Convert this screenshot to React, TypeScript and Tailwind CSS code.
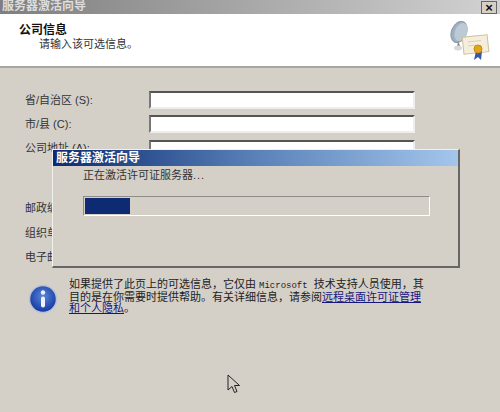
const fields = [
  { label: "省/自治区 (S):" },
  { label: "市/县 (C):" },
  { label: "公司地址 (A):", tall: true },
  { label: "邮政编码 (Z):" },
  { label: "组织单位 (O):" },
  { label: "电子邮件 (E):" },
];

function CertIcon() {
  return (
    <svg width="42" height="42" viewBox="0 0 42 42" className="block">
      <ellipse cx="10" cy="11" rx="7.500" ry="11" transform="rotate(22 10 11)" fill="#9fb0c0" stroke="#8d9aa6" />
      <ellipse cx="12" cy="11" rx="6" ry="9.500" transform="rotate(22 12 11)" fill="#bccad6" />
      <path d="M9 20l-1 7h4z" fill="#7d8388" />
      <ellipse cx="9" cy="27" rx="4" ry="2.500" fill="#d8d8d6" />
      <rect x="14" y="15" width="25" height="17" fill="#f6eedc" stroke="#cdbf9f" transform="rotate(-6 26 23)" />
      <path d="M19 21l13-1.500M19 25l8-1" stroke="#dccfb2" />
      <path d="M27 30l-2 9 4-3 3 3 1-9z" fill="#3558a8" />
      <circle cx="29" cy="28" r="4" fill="#e3a51f" stroke="#c98a10" />
    </svg>
  );
}

function InfoIcon() {
  return (
    <svg width="30" height="30" viewBox="0 0 30 30" className="block">
      <defs>
        <radialGradient id="infoFill" cx="50%" cy="40%" r="60%">
          <stop offset="0%" stopColor="#5a86dc" />
          <stop offset="100%" stopColor="#12379c" />
        </radialGradient>
      </defs>
      <circle cx="15" cy="15" r="13.500" fill="url(#infoFill)" stroke="#b9c3d8" strokeWidth="1.500" />
      <circle cx="15" cy="8.500" r="2.200" fill="#eef2fa" />
      <rect x="13" y="12.500" width="4" height="11" rx="2" fill="#eef2fa" />
    </svg>
  );
}

export default function App() {
  return (
    <div className="relative w-[500px] h-[412px] overflow-hidden bg-[#d4d0c8] text-[11px] leading-[14px] text-[#222] font-['Liberation_Sans','Noto_Sans_CJK_SC',sans-serif]">
      {/* title bar */}
      <div className="flex h-[14px] items-center justify-between bg-gradient-to-r from-[#7f7f7f] via-[#a8a8a8] to-[#d2d2d2] pl-[2px] pr-[3px]">
        <span className="-mt-[3px] text-[12px] font-bold leading-[14px] text-[#ddd]">服务器激活向导</span>
        <div className="flex h-[13px] w-[16px] items-center justify-center border border-[#666] bg-[#d4d0c8] text-[13px] font-bold leading-none text-[#111]">×</div>
      </div>

      {/* header */}
      <div className="flex h-[54px] justify-between border-b-2 border-[#a8a6a0] bg-white pl-[19px] pr-[9px]">
        <div className="pt-[9px]">
          <div className="text-[12px] font-bold text-[#111]">公司信息</div>
          <div className="pl-[20px] text-[#333]">请输入该可选信息。</div>
        </div>
        <div className="pt-[7px]">
          <CertIcon />
        </div>
      </div>

      {/* form */}
      <div className="flex flex-col gap-[7px] pl-[25px] pt-[23px]">
        {fields.map((f) => (
          <div key={f.label} className={f.tall ? "flex h-[53px] items-start" : "flex h-[17.300px] items-center"}>
            <div className={f.tall ? "w-[124px] pt-[1px] text-[#333]" : "w-[124px] text-[#333]"}>{f.label}</div>
            <div className={f.tall ? "h-[53px] w-[266px] border-2 border-b-[#eee] border-l-[#777] border-r-[#eee] border-t-[#555] bg-white" : "h-[18px] w-[266px] border-2 border-b-[#eee] border-l-[#777] border-r-[#eee] border-t-[#555] bg-white"} />
          </div>
        ))}
      </div>

      {/* info note */}
      <div className="flex gap-[11px] pl-[28px] pt-[14px]">
        <div className="pt-[5px]"><InfoIcon /></div>
        <p className="whitespace-nowrap text-[11px] leading-[11px] text-[#222]">
          如果提供了此页上的可选信息，它仅由 <span className="mr-[3px] font-['Liberation_Mono'] text-[9px]">Microsoft</span> 技术支持人员使用，其
          <br />
          目的是在你需要时提供帮助。有关详细信息，请参阅<span className="text-[#16167e] underline">远程桌面许可证管理</span>
          <br />
          <span className="text-[#16167e] underline">和个人隐私</span>。
        </p>
      </div>

      {/* progress dialog */}
      <div className="absolute left-[52px] top-[149px] h-[119px] w-[408px] border-b-2 border-r-2 border-b-[#666] border-r-[#666] border-l border-t border-l-[#f2f0ea] border-t-[#f2f0ea] bg-[#d4d0c8]">
        <div className="flex h-[16px] items-center bg-gradient-to-r from-[#0f2a70] via-[#5a82b8] to-[#a4c6ec] pl-[3px] text-[12px] font-bold text-white">服务器激活向导</div>
        <div className="pl-[30px] pt-[2px] text-[#333]">正在激活许可证服务器<span className="tracking-[1px]">...</span></div>
        <div className="ml-[30px] mt-[14px] h-[20px] w-[347px] border border-b-white border-l-[#8e8c86] border-r-white border-t-[#8e8c86] p-[1px]">
          <div className="h-full w-[45px] bg-[#0e2a72]" />
        </div>
      </div>

      {/* mouse pointer */}
      <svg width="14" height="20" viewBox="0 0 14 20" className="absolute left-[227px] top-[374px]">
        <path d="M1 1v15l4-3.500 2.500 6 2.500-1-2.500-6h5z" fill="#d4d0c8" stroke="#222" strokeWidth="1" />
      </svg>
    </div>
  );
}
